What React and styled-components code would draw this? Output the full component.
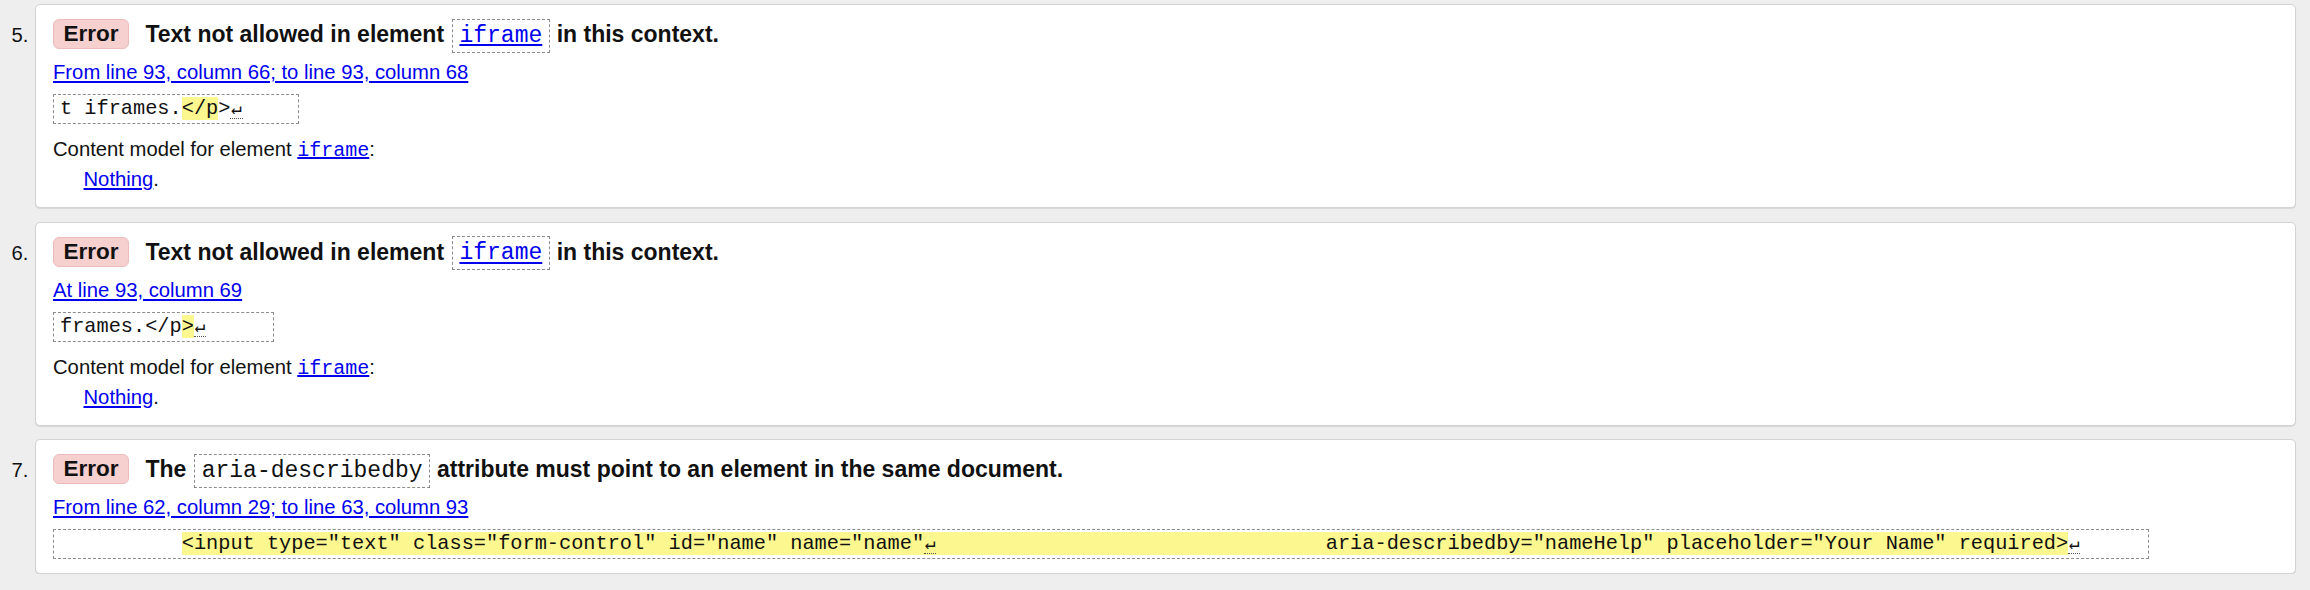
import React from 'react';
import styled, { createGlobalStyle } from 'styled-components';

const Global = createGlobalStyle`
  html, body { margin: 0; padding: 0; background: #eeeeee; }
  body { font-family: "Liberation Sans", Arial, sans-serif; color: #111; }
`;

const List = styled.ol`
  list-style: none;
  margin: 0;
  padding: 4px 14px 0 0;
  display: flex;
  flex-direction: column;
  gap: 13.5px;
`;

const Item = styled.li`
  display: grid;
  grid-template-columns: 35px 1fr;
  align-items: baseline;
`;

const Marker = styled.span`
  font-size: 20.25px;
  text-align: right;
  padding-right: 6.5px;
  color: #111;
`;

const Card = styled.div`
  background: #fff;
  border: 1px solid #d3d3d3;
  border-radius: 5px;
  box-shadow: 0 1px 1px rgba(0, 0, 0, 0.1);
  padding: 14px 17px 13.5px;
  display: flex;
  flex-direction: column;
  align-items: flex-start;
`;

const Title = styled.p`
  margin: 0;
  font-size: 23px;
  font-weight: bold;
  line-height: 30px;
  white-space: nowrap;
`;

const Badge = styled.strong`
  display: inline-block;
  vertical-align: top;
  font-size: 22.5px;
  line-height: 28px;
  padding: 0 9.5px;
  margin-right: 10px;
  background: #f6cfcf;
  border: 1px solid #ecbcbc;
  border-radius: 6px;
  color: #111;
`;

const TitleCode = styled.code`
  font-family: "Liberation Mono", "Courier New", monospace;
  font-size: 23px;
  font-weight: normal;
  line-height: 1;
  border: 1px dashed #8c8c8c;
  padding: 3.3px 6.5px 2.6px;
  margin-left: 1.5px;
  margin-right: 0.5px;
`;

const Link = styled.a`
  color: #0000ee;
  text-decoration: underline;
  cursor: pointer;
`;

const Text = styled.p`
  margin: ${(p) => p.$mt || 0}px 0 ${(p) => p.$mb || 0}px ${(p) => p.$indent || 0}px;
  font-size: 20.25px;
  line-height: 26px;
  white-space: nowrap;
`;

const MonoLink = styled(Link)`
  font-family: "Liberation Mono", "Courier New", monospace;
  font-size: 20px;
  line-height: 1;
`;

const Extract = styled.p`
  margin: 9px 0 0;
  border: 1px dashed #8c8c8c;
  padding: 1px ${(p) => p.$tail}px 1px 6px;
  font-family: "Liberation Mono", "Courier New", monospace;
  font-size: 20.3px;
  line-height: 26px;
  white-space: pre;
  color: #111;
`;

const Mark = styled.mark`
  background: #fdf78f;
  color: inherit;
`;

const Ret = styled.span`
  display: inline-block;
  width: 12.18px;
  line-height: 18px;
  font-size: 18px;
  text-align: center;
  border-bottom: 1px dotted #555;
`;

const RET = <Ret>↵</Ret>;

function ContentModel() {
  return (
    <>
      <Text $mt={12}>
        Content model for element <MonoLink>iframe</MonoLink>:
      </Text>
      <Text $mt={4} $mb={1.5} $indent={30.5}>
        <Link>Nothing</Link>.
      </Text>
    </>
  );
}

export default function App() {
  return (
    <>
      <Global />
      <List>
        <Item>
          <Marker>5.</Marker>
          <Card>
            <Title>
              <Badge>Error</Badge> Text not allowed in element{' '}
              <TitleCode>
                <Link>iframe</Link>
              </TitleCode>{' '}
              in this context.
            </Title>
            <Text $mt={10}>
              <Link>From line 93, column 66; to line 93, column 68</Link>
            </Text>
            <Extract $tail={55}>
              t iframes.<Mark>&lt;/p</Mark>&gt;{RET}
            </Extract>
            <ContentModel />
          </Card>
        </Item>
        <Item>
          <Marker>6.</Marker>
          <Card>
            <Title>
              <Badge>Error</Badge> Text not allowed in element{' '}
              <TitleCode>
                <Link>iframe</Link>
              </TitleCode>{' '}
              in this context.
            </Title>
            <Text $mt={10}>
              <Link>At line 93, column 69</Link>
            </Text>
            <Extract $tail={67}>
              frames.&lt;/p<Mark>&gt;</Mark>{RET}
            </Extract>
            <ContentModel />
          </Card>
        </Item>
        <Item>
          <Marker>7.</Marker>
          <Card>
            <Title>
              <Badge>Error</Badge> The <TitleCode>aria-describedby</TitleCode>{' '}
              attribute must point to an element in the same document.
            </Title>
            <Text $mt={10}>
              <Link>From line 62, column 29; to line 63, column 93</Link>
            </Text>
            <Extract $tail={68}>
              {'          '}
              <Mark>
                {'<input type="text" class="form-control" id="name" name="name"'}
                {RET}
                {'                                aria-describedby="nameHelp" placeholder="Your Name" required>'}
              </Mark>
              {RET}
            </Extract>
          </Card>
        </Item>
      </List>
    </>
  );
}
